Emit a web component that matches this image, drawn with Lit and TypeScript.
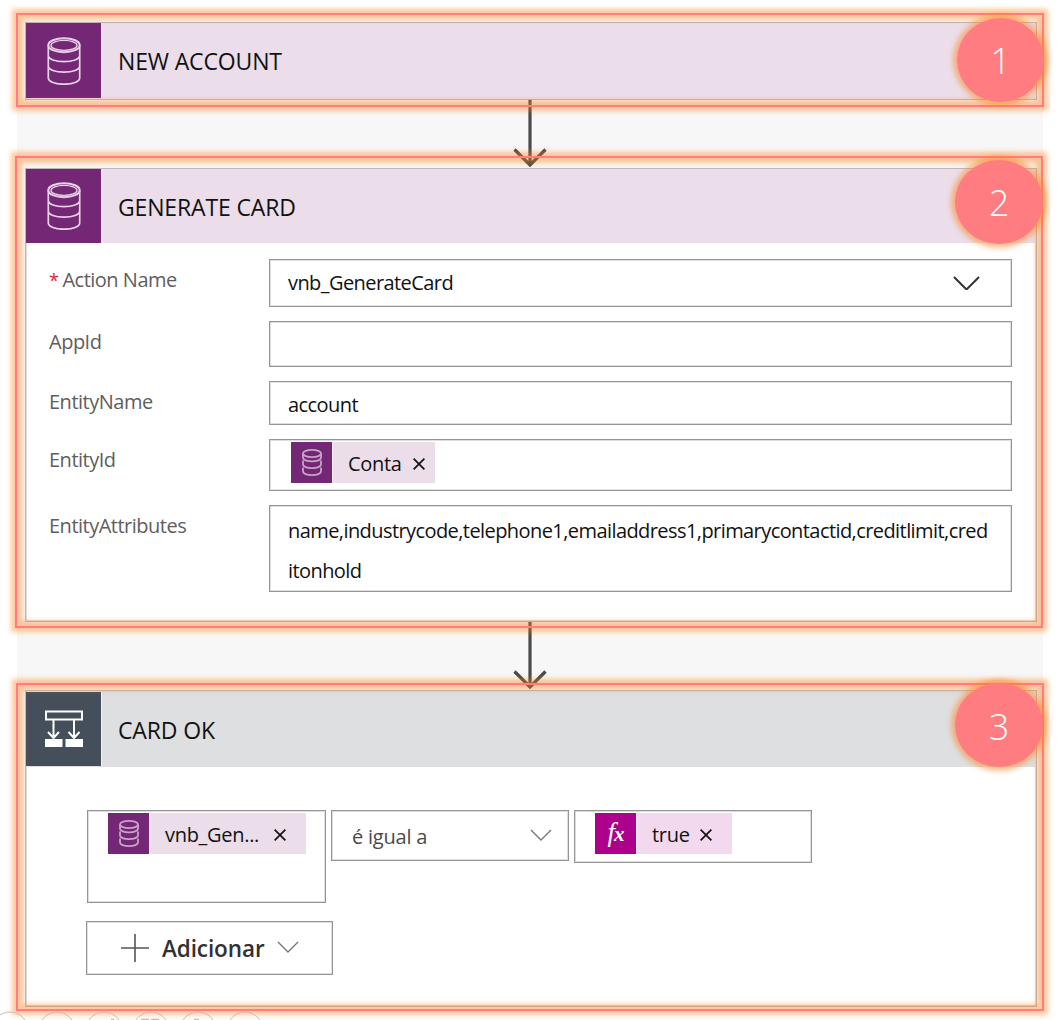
import { LitElement, html, svg, css } from "lit";
import { customElement, property } from "lit/decorators.js";

/** Icons shared by the card headers and the value tokens. */
const databaseIcon = svg`
  <g fill="none" stroke="currentColor">
    <ellipse cx="17" cy="8.2" rx="15.7" ry="7" stroke-width="2"/>
    <ellipse cx="17" cy="8.4" rx="13" ry="5" stroke-width="1.4"/>
    <path stroke-width="1.7" d="M1.300 8.500V41c0 3.600 7 6.200 15.700 6.200S32.700 44.600 32.700 41V8.500M1.300 18.500c0 3.600 7 6.200 15.700 6.200s15.700-2.600 15.700-6.200M1.300 29c0 3.600 7 6.200 15.700 6.200S32.700 32.600 32.700 29"/>
  </g>`;

const tokenDatabaseIcon = svg`
  <g fill="none" stroke="currentColor" stroke-width="1.800">
    <ellipse cx="10" cy="4.500" rx="9" ry="3.600"/>
    <path d="M1 4.500v4.300c0 2 4 3.600 9 3.600s9-1.600 9-3.600V4.500M1 11.500v4c0 2 4 3.600 9 3.600s9-1.600 9-3.600v-4M1 18.500v4c0 2 4 3.600 9 3.600s9-1.600 9-3.600v-4"/>
  </g>`;

@customElement("value-token")
class ValueToken extends LitElement {
  @property() label = "";
  @property({ reflect: true }) kind: "data" | "fx" = "data";

  static styles = css`
    :host { display: inline-flex; height: 41px; box-sizing: border-box; font: 20px/43px "Open Sans", "Noto Sans", sans-serif; color: #111; background: #ebdeea; }
    :host([kind="fx"]) { background: #f2d9ed; }
    .icon { width: 41px; height: 41px; background: #742774; color: #c9a3c9; display: flex; align-items: center; justify-content: center; border-right: 1px solid #f8f2f8; }
    :host([kind="fx"]) .icon { background: #ad008c; color: #fff; }
    .fx { font: italic 27px/34px "Liberation Serif", serif; letter-spacing: -1px; padding-bottom: 2px; }
    .fx small { font-size: 21px; font-weight: bold; }
    .text { padding-left: 15px; letter-spacing: -0.3px; white-space: nowrap; width: var(--token-text, 54px); }
    .close { padding: 16px var(--token-end, 10px) 0 11px; width: 12px; line-height: 0; }
  `;

  render() {
    return html`
      <span class="icon">${this.kind === "fx"
        ? html`<span class="fx">f<small>x</small></span>`
        : html`<svg width="20" height="27" viewBox="0 0 20 27">${tokenDatabaseIcon}</svg>`}</span>
      <span class="text">${this.label}</span>
      <span class="close"><svg width="12" height="12" viewBox="0 0 12 12"><path d="M.6.6l10.800 10.800M11.400.6L.6 11.400" stroke="#111" stroke-width="1.700"/></svg></span>
    `;
  }
}

@customElement("flow-arrow")
class FlowArrow extends LitElement {
  static styles = css`
    :host { display: flex; justify-content: center; height: 68px; }
    svg { display: block; }
  `;
  render() {
    return html`<svg width="36" height="68" viewBox="0 0 36 68"><path d="M17 0v65M1.500 49.500L17 65l15.500-15.500" fill="none" stroke="#4a4a4a" stroke-width="3.200"/></svg>`;
  }
}

@customElement("app-root")
class AppRoot extends LitElement {
  static styles = css`
    :host { display: block; height: 1020px; overflow: hidden; background: #fff; font-family: "Open Sans", "Noto Sans", sans-serif; color: #111; position: relative; }
    .canvas { margin: 0 15px 0 17px; padding: 22px 6px 0 8px; background: linear-gradient(#fff 20px, #f7f7f7 20px 1000px, #fff 1000px); height: 986px; }
    .step { position: relative; }
    .card { box-sizing: border-box; border: 1px solid #bdb9ba; box-shadow: inset 0 0 0 1px #e0dcdf; background: #fff; }
    .trigger .card { height: 78px; }
    .action .card { height: 454px; }
    .condition .card { height: 317px; }
    .head { display: flex; height: 74px; background: #ebdeea; font-size: 23px; line-height: 76px; }
    .trigger .head { height: 76px; line-height: 77px; }
    .condition .head { background: #dedfe0; height: 76px; line-height: 79px; }
    .badge-icon { width: 76px; height: 74px; margin-right: 16px; background: #742774; color: #e6d2e6; display: flex; align-items: center; justify-content: center; border-right: 1px solid #f6eef6; box-sizing: border-box; }
    .trigger .badge-icon { height: 75px; }
    .condition .badge-icon { background: #454f5b; color: #fff; margin-top: 1px; }
    .title { white-space: nowrap; letter-spacing: -0.15px; }

    .frame { position: absolute; z-index: 2; border: 2px solid #ff7c80; pointer-events: none; box-shadow: 0 0 5px 4px rgba(250,125,20,.43), inset 0 0 5px 5px rgba(250,125,20,.43); }
    .trigger .frame { inset: -9px -7px -7px -9px; }
    .action .frame { inset: -12px -6px -6px -10px; }
    .condition .frame { inset: -7px -7px -4px -9px; }
    .number { position: absolute; z-index: 3; width: 88px; height: 84px; top: -8px; right: -6px; border-radius: 50%; background: #ff7c80; color: #fff; text-align: center; font-size: 36px; font-weight: 300; line-height: 85px; box-shadow: 0 0 5px 4px rgba(255,127,30,.5); }
    .trigger .number { top: -4px; right: -7px; width: 87px; line-height: 86px; }
    .condition .number { top: -7px; line-height: 87px; }

    .fields { display: grid; grid-template-columns: 220px 743px; grid-template-rows: 48px 46px 44px 52px 87px; row-gap: 14px; padding: 16px 0 0 23px; font-size: 20px; }
    .label { color: #5f5e5d; line-height: 28px; padding-top: 7px; white-space: nowrap; letter-spacing: -0.5px; }
    .star { color: #e8213a; margin-right: 4px; font-size: 18px; }
    .box { box-sizing: border-box; border: 1px solid #959595; box-shadow: inset 0 0 0 1px #dedede; background: #fff; }
    .value { padding-left: 18px; display: flex; white-space: nowrap; line-height: 46px; letter-spacing: -0.575px; }
    .select { justify-content: space-between; padding-right: 31px; align-items: center; }
    .entity-id { padding: 2px 0 0 21px; }
    .attributes { display: block; line-height: 40px; padding-top: 5px; }

    .row { display: flex; align-items: flex-start; gap: 5px; padding: 43px 0 0 61px; font-size: 20px; }
    .operand { height: 93px; width: 239px; padding: 2px 0 0 20px; }
    .operator { height: 51px; width: 238px; padding: 1px 16px 0 20px; display: flex; align-items: center; justify-content: space-between; color: #4a4a4a; letter-spacing: -0.2px; }
    .result { height: 53px; width: 238px; padding: 2px 0 0 20px; }
    .left { --token-text: 98px; --token-end: 20px; }
    .left value-token { margin-left: 0; }
    .right { --token-text: 37px; --token-end: 20px; }
    .add { margin: 18px 0 0 60px; width: 247px; height: 54px; display: flex; align-items: center; padding-left: 34px; font-size: 22.500px; font-weight: 600; color: #323130; }
    .add-text { padding: 1px 12px 0 13px; letter-spacing: -0.1px; }
    .dock { position: absolute; left: 0; top: 1010px; z-index: 4; }
  `;

  private badge() {
    return html`<span class="badge-icon"><svg width="34" height="48" viewBox="0 0 34 48">${databaseIcon}</svg></span>`;
  }

  private chevron(w: number, stroke: string, sw: number) {
    return html`<svg width=${w} height="14" viewBox="0 0 ${w} 14"><path d="M1 1L${w / 2} ${w / 2}L${w - 1} 1" fill="none" stroke=${stroke} stroke-width=${sw}/></svg>`;
  }

  render() {
    return html`
      <main class="canvas">
        <section class="step trigger">
          <div class="card"><div class="head">${this.badge()}<span class="title">NEW ACCOUNT</span></div></div>
          <div class="frame"></div><div class="number">1</div>
        </section>
        <flow-arrow></flow-arrow>
        <section class="step action">
          <div class="card">
            <div class="head">${this.badge()}<span class="title">GENERATE CARD</span></div>
            <div class="fields">
              <div class="label"><span class="star">*</span>Action Name</div>
              <div class="box value select"><span>vnb_GenerateCard</span>${this.chevron(27, "#333", 2)}</div>
              <div class="label">AppId</div>
              <div class="box value"></div>
              <div class="label">EntityName</div>
              <div class="box value">account</div>
              <div class="label">EntityId</div>
              <div class="box value entity-id"><value-token label="Conta"></value-token></div>
              <div class="label">EntityAttributes</div>
              <div class="box value attributes">
                <div>name,industrycode,telephone1,emailaddress1,primarycontactid,creditlimit,cred</div>
                <div>itonhold</div>
              </div>
            </div>
          </div>
          <div class="frame"></div><div class="number">2</div>
        </section>
        <flow-arrow></flow-arrow>
        <section class="step condition">
          <div class="card">
            <div class="head">
              <span class="badge-icon"><svg width="40" height="40" viewBox="0 0 40 40">
                <path d="M2 2.500h36v8H2zM9.500 11v17M30 11v17M4 23l5.500 6 5.500-6M24.500 23l5.500 6 5.500-6" fill="none" stroke="currentColor" stroke-width="2"/>
                <path d="M1 30h17.500v8H1zM21.500 30H39v8H21.500z" fill="currentColor"/></svg></span>
              <span class="title">CARD OK</span>
            </div>
            <div class="row">
              <div class="box operand left"><value-token label="vnb_Gen..."></value-token></div>
              <div class="box operator"><span>é igual a</span>${this.chevron(22, "#777", 1.4)}</div>
              <div class="box result right"><value-token kind="fx" label="true"></value-token></div>
            </div>
            <div class="box add">
              <svg width="28" height="28" viewBox="0 0 28 28"><path d="M14 0v28M0 14h28" stroke="#555" stroke-width="1.600"/></svg>
              <span class="add-text">Adicionar</span>${this.chevron(22, "#777", 1.4)}
            </div>
          </div>
          <div class="frame"></div><div class="number">3</div>
        </section>
      </main>
      <svg class="dock" width="270" height="10" viewBox="0 0 270 10" fill="none" stroke="#c4bcb8">
        ${[10, 57, 104, 151, 198, 245].map((x) => svg`<circle cx=${x} cy="20" r="18"/>`)}
        <path d="M111 9.500h3M141 9.500h8M151 9.500h8M194 9.500h5" stroke-width="1.500"/>
      </svg>
    `;
  }
}
